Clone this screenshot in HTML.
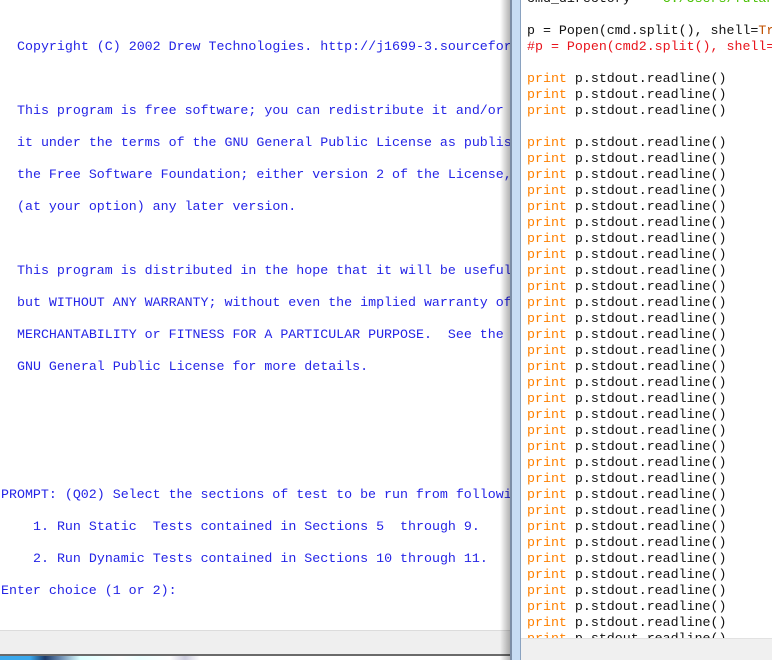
<!DOCTYPE html>
<html><head><style>
body{margin:0;width:772px;height:660px;overflow:hidden;background:#fff;position:relative;font-family:"Liberation Mono",monospace;font-size:13.3px}
.l{position:absolute;left:0;top:0;width:510px;height:660px;background:#fff;overflow:hidden}
.t{position:absolute;white-space:pre;color:#2424e6;line-height:16px}
.r{position:absolute;left:521px;top:0;width:251px;height:660px;background:#fff;overflow:hidden}
.c{position:absolute;left:6px;white-space:pre;line-height:16px;color:#111}
.o{color:#ff8000}.red{color:#e8141c}.g{color:#48c000}
</style></head><body>
<div class="l">
<div class="t" style="left:17px;top:39px">Copyright (C) 2002 Drew Technologies. http://j1699-3.sourceforge</div>
<div class="t" style="left:17px;top:103px">This program is free software; you can redistribute it and/or mod</div>
<div class="t" style="left:17px;top:135px">it under the terms of the GNU General Public License as published</div>
<div class="t" style="left:17px;top:167px">the Free Software Foundation; either version 2 of the License, or</div>
<div class="t" style="left:17px;top:199px">(at your option) any later version.</div>
<div class="t" style="left:17px;top:263px">This program is distributed in the hope that it will be useful,</div>
<div class="t" style="left:17px;top:295px">but WITHOUT ANY WARRANTY; without even the implied warranty of</div>
<div class="t" style="left:17px;top:327px">MERCHANTABILITY or FITNESS FOR A PARTICULAR PURPOSE.  See the</div>
<div class="t" style="left:17px;top:359px">GNU General Public License for more details.</div>
<div class="t" style="left:1px;top:487px">PROMPT: (Q02) Select the sections of test to be run from following</div>
<div class="t" style="left:33px;top:519px">1. Run Static  Tests contained in Sections 5  through 9.</div>
<div class="t" style="left:33px;top:551px">2. Run Dynamic Tests contained in Sections 10 through 11.</div>
<div class="t" style="left:1px;top:583px">Enter choice (1 or 2):</div>
<div style="position:absolute;left:0;top:630px;width:510px;height:1px;background:#dcdcdc"></div>
<div style="position:absolute;left:0;top:631px;width:510px;height:23px;background:#efefef"></div>
<div style="position:absolute;left:0;top:654px;width:510px;height:2px;background:#6a6a6a"></div>
<div style="position:absolute;left:0;top:656px;width:510px;height:4px;background:linear-gradient(90deg,#3aa8ec 0,#3aa8ec 30px,#1c3c6c 45px,#6a8ab0 60px,#dff 80px,#fff 120px,#eff 140px,#fff 170px,#ccd 185px,#fff 200px)"></div>
<div style="position:absolute;right:0;top:0;width:10px;height:660px;background:linear-gradient(90deg,rgba(0,0,0,0),rgba(0,0,0,.3))"></div>
</div>
<div style="position:absolute;left:510px;top:0;width:11px;height:660px;background:#c7ddf4;border-left:2px solid #7c8ea6;border-right:1px solid #8aa2c0;box-sizing:border-box"></div>
<div class="r">
<div class="c" style="top:-9px">cmd_directory    <span class="g">C:/Users/fulano</span></div>
<div class="c" style="top:23px">p = Popen(cmd.split(), shell=<span style="color:#c05000">True</span></div>
<div class="c red" style="top:39px">#p = Popen(cmd2.split(), shell=True</div>
<div class="c" style="top:71px"><span class="o">print</span> p.stdout.readline()
<span class="o">print</span> p.stdout.readline()
<span class="o">print</span> p.stdout.readline()

<span class="o">print</span> p.stdout.readline()
<span class="o">print</span> p.stdout.readline()
<span class="o">print</span> p.stdout.readline()
<span class="o">print</span> p.stdout.readline()
<span class="o">print</span> p.stdout.readline()
<span class="o">print</span> p.stdout.readline()
<span class="o">print</span> p.stdout.readline()
<span class="o">print</span> p.stdout.readline()
<span class="o">print</span> p.stdout.readline()
<span class="o">print</span> p.stdout.readline()
<span class="o">print</span> p.stdout.readline()
<span class="o">print</span> p.stdout.readline()
<span class="o">print</span> p.stdout.readline()
<span class="o">print</span> p.stdout.readline()
<span class="o">print</span> p.stdout.readline()
<span class="o">print</span> p.stdout.readline()
<span class="o">print</span> p.stdout.readline()
<span class="o">print</span> p.stdout.readline()
<span class="o">print</span> p.stdout.readline()
<span class="o">print</span> p.stdout.readline()
<span class="o">print</span> p.stdout.readline()
<span class="o">print</span> p.stdout.readline()
<span class="o">print</span> p.stdout.readline()
<span class="o">print</span> p.stdout.readline()
<span class="o">print</span> p.stdout.readline()
<span class="o">print</span> p.stdout.readline()
<span class="o">print</span> p.stdout.readline()
<span class="o">print</span> p.stdout.readline()
<span class="o">print</span> p.stdout.readline()
<span class="o">print</span> p.stdout.readline()
<span class="o">print</span> p.stdout.readline()
<span class="o">print</span> p.stdout.readline()
<span class="o">print</span> p.stdout.readline()
<span class="o">print</span> p.stdout.readline()</div>
<div style="position:absolute;left:0;top:638px;width:251px;height:22px;background:#f0f0f0;border-top:1px solid #e2e2e2"></div>
</div>
</body></html>
